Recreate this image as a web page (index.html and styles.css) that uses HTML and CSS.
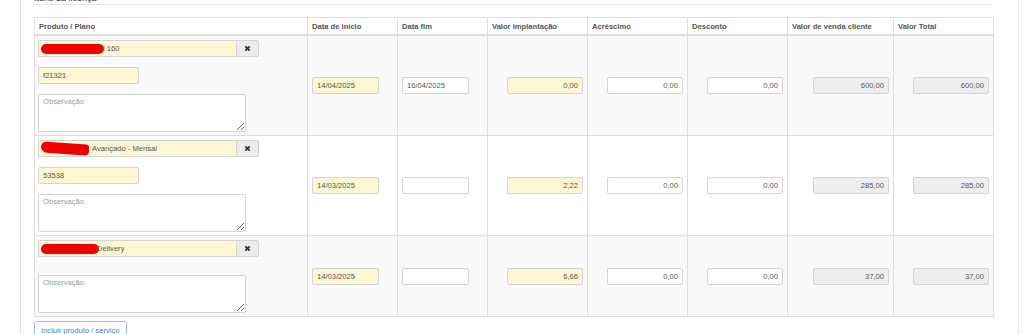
FILE: index.html
```html
<!DOCTYPE html>
<html lang="pt-BR">
<head>
<meta charset="UTF-8" />
<title>Itens da licença</title>
<link rel="stylesheet" href="styles.css">
</head>
<body>

<div class="panel">
  <div class="legend">Itens da licença</div>

  <table class="items">
    <colgroup>
      <col style="width:273px"><col style="width:90px"><col style="width:90px"><col style="width:100px">
      <col style="width:100px"><col style="width:100px"><col style="width:106px"><col style="width:100px">
    </colgroup>
    <thead>
      <tr>
        <th>Produto / Plano</th>
        <th>Data de início</th>
        <th>Data fim</th>
        <th>Valor implantação</th>
        <th>Acréscimo</th>
        <th>Desconto</th>
        <th>Valor de venda cliente</th>
        <th>Valor Total</th>
      </tr>
    </thead>
    <tbody>
      <tr class="striped">
        <td class="prod">
          <div class="prod-field">
            <div class="prod-value"><span class="redact r1"></span>l 160</div>
            <button class="btn-clear"><svg width="7" height="7" viewBox="0 0 8 8"><path d="M1.5 1.5 L6.5 6.5 M6.5 1.5 L1.5 6.5" stroke="#333" stroke-width="2"/></svg></button>
          </div>
          <input class="field code hl" type="text" value="f21321">
          <textarea class="obs" placeholder="Observação"></textarea>
        </td>
        <td><input class="field date hl" type="text" value="14/04/2025"></td>
        <td><input class="field date" type="text" value="16/04/2025"></td>
        <td class="num"><input class="field money hl" type="text" value="0,00"></td>
        <td class="num"><input class="field money" type="text" value="0,00"></td>
        <td class="num"><input class="field money" type="text" value="0,00"></td>
        <td class="num"><input class="field money ro" type="text" value="600,00" readonly></td>
        <td class="num"><input class="field money ro" type="text" value="600,00" readonly></td>
      </tr>
      <tr>
        <td class="prod">
          <div class="prod-field">
            <div class="prod-value"><span class="redact r2"></span>Avançado - Mensal</div>
            <button class="btn-clear"><svg width="7" height="7" viewBox="0 0 8 8"><path d="M1.5 1.5 L6.5 6.5 M6.5 1.5 L1.5 6.5" stroke="#333" stroke-width="2"/></svg></button>
          </div>
          <input class="field code hl" type="text" value="53538">
          <textarea class="obs" placeholder="Observação"></textarea>
        </td>
        <td><input class="field date hl" type="text" value="14/03/2025"></td>
        <td><input class="field date" type="text" value=""></td>
        <td class="num"><input class="field money hl" type="text" value="2,22"></td>
        <td class="num"><input class="field money" type="text" value="0,00"></td>
        <td class="num"><input class="field money" type="text" value="0,00"></td>
        <td class="num"><input class="field money ro" type="text" value="285,00" readonly></td>
        <td class="num"><input class="field money ro" type="text" value="285,00" readonly></td>
      </tr>
      <tr class="striped">
        <td class="prod">
          <div class="prod-field no-code">
            <div class="prod-value"><span class="redact r3"></span>Delivery</div>
            <button class="btn-clear"><svg width="7" height="7" viewBox="0 0 8 8"><path d="M1.5 1.5 L6.5 6.5 M6.5 1.5 L1.5 6.5" stroke="#333" stroke-width="2"/></svg></button>
          </div>
          <textarea class="obs" placeholder="Observação"></textarea>
        </td>
        <td><input class="field date hl" type="text" value="14/03/2025"></td>
        <td><input class="field date" type="text" value=""></td>
        <td class="num"><input class="field money hl" type="text" value="6,66"></td>
        <td class="num"><input class="field money" type="text" value="0,00"></td>
        <td class="num"><input class="field money" type="text" value="0,00"></td>
        <td class="num"><input class="field money ro" type="text" value="37,00" readonly></td>
        <td class="num"><input class="field money ro" type="text" value="37,00" readonly></td>
      </tr>
    </tbody>
  </table>

  <button class="btn-add">Incluir produto / serviço</button>
</div>

</body>
</html>
```

FILE: styles.css
```css
body { margin: 0; background: #fff; color: #555; font-family: "Liberation Sans", Arial, sans-serif; font-size: 7.6px; overflow: hidden; }
.panel { margin-left: 20px; width: 972px; height: 400px; padding: 0 12px 0 13px; border-left: 1px solid #e7e7e7; border-right: 1px solid #e7e7e7; }
.legend { margin-top: -7px; height: 11px; line-height: 11px; font-size: 9px; color: #333; border-bottom: 1px solid #e5e5e5; width: 959px; }
.items { margin-top: 12px; width: 960px; table-layout: fixed; border-collapse: collapse; border: 1px solid #ddd; }
.items th { height: 16px; padding: 0 4px; text-align: left; font-weight: bold; color: #555; border: 1px solid #ddd; border-bottom: 2px solid #ddd; white-space: nowrap; overflow: hidden; }
.items td { padding: 4px; border: 1px solid #ddd; vertical-align: middle; }
.items td.prod { padding: 4px 3px 3px; }
.items td.num { text-align: right; }
.items tr.striped td { background: #f9f9f9; }
.field { box-sizing: border-box; height: 17px; padding: 0 4px; border: 1px solid #d4d4d4; border-radius: 2px; background: #fff; color: #555; font-family: inherit; font-size: 7.6px; outline: none; display: inline-block; vertical-align: middle; margin: 0; }
.field.hl { background: #fcf7d2; }
.field.ro { background: #eee; }
.field.date { width: 67px; }
.field.money { width: 76px; text-align: right; }
.field.code { width: 101px; display: block; margin-bottom: 10px; }
.prod-field { display: flex; width: 221px; height: 17px; margin-bottom: 10px; }
.prod-field.no-code { margin-bottom: 18px; }
.prod-value { flex: 1; box-sizing: border-box; padding: 0 4px 0 2px; border: 1px solid #d4d4d4; border-right: 0; border-radius: 2px 0 0 2px; background: #fcf7d2; display: flex; align-items: center; white-space: nowrap; }
.btn-clear { width: 23px; padding: 0; border: 1px solid #d4d4d4; border-radius: 0 2px 2px 0; background: #ececec; display: flex; align-items: center; justify-content: center; }
.redact { display: inline-block; background: #f20000; border-radius: 6px; }
.redact.r1 { width: 63px; height: 10px; margin-right: -1px; }
.redact.r2 { width: 48px; height: 11px; margin-right: 3px; border-radius: 8px 4px 6px 8px; transform: skewY(4deg); }
.redact.r3 { width: 58px; height: 10px; margin-right: -2px; }
.obs { box-sizing: border-box; display: block; width: 208px; height: 38px; padding: 2px 4px; margin: 0; border: 1px solid #d4d4d4; border-radius: 2px; background: #fff; font-family: inherit; font-size: 7.6px; color: #555; resize: vertical; outline: none; }
.obs::placeholder { color: #999; }
.btn-add { margin-top: 4px; height: 18px; padding: 0 6px; border: 1px solid #8ccbe2; border-radius: 2px; background: #fff; color: #3a87b8; font-family: inherit; font-size: 7.6px; }
```
